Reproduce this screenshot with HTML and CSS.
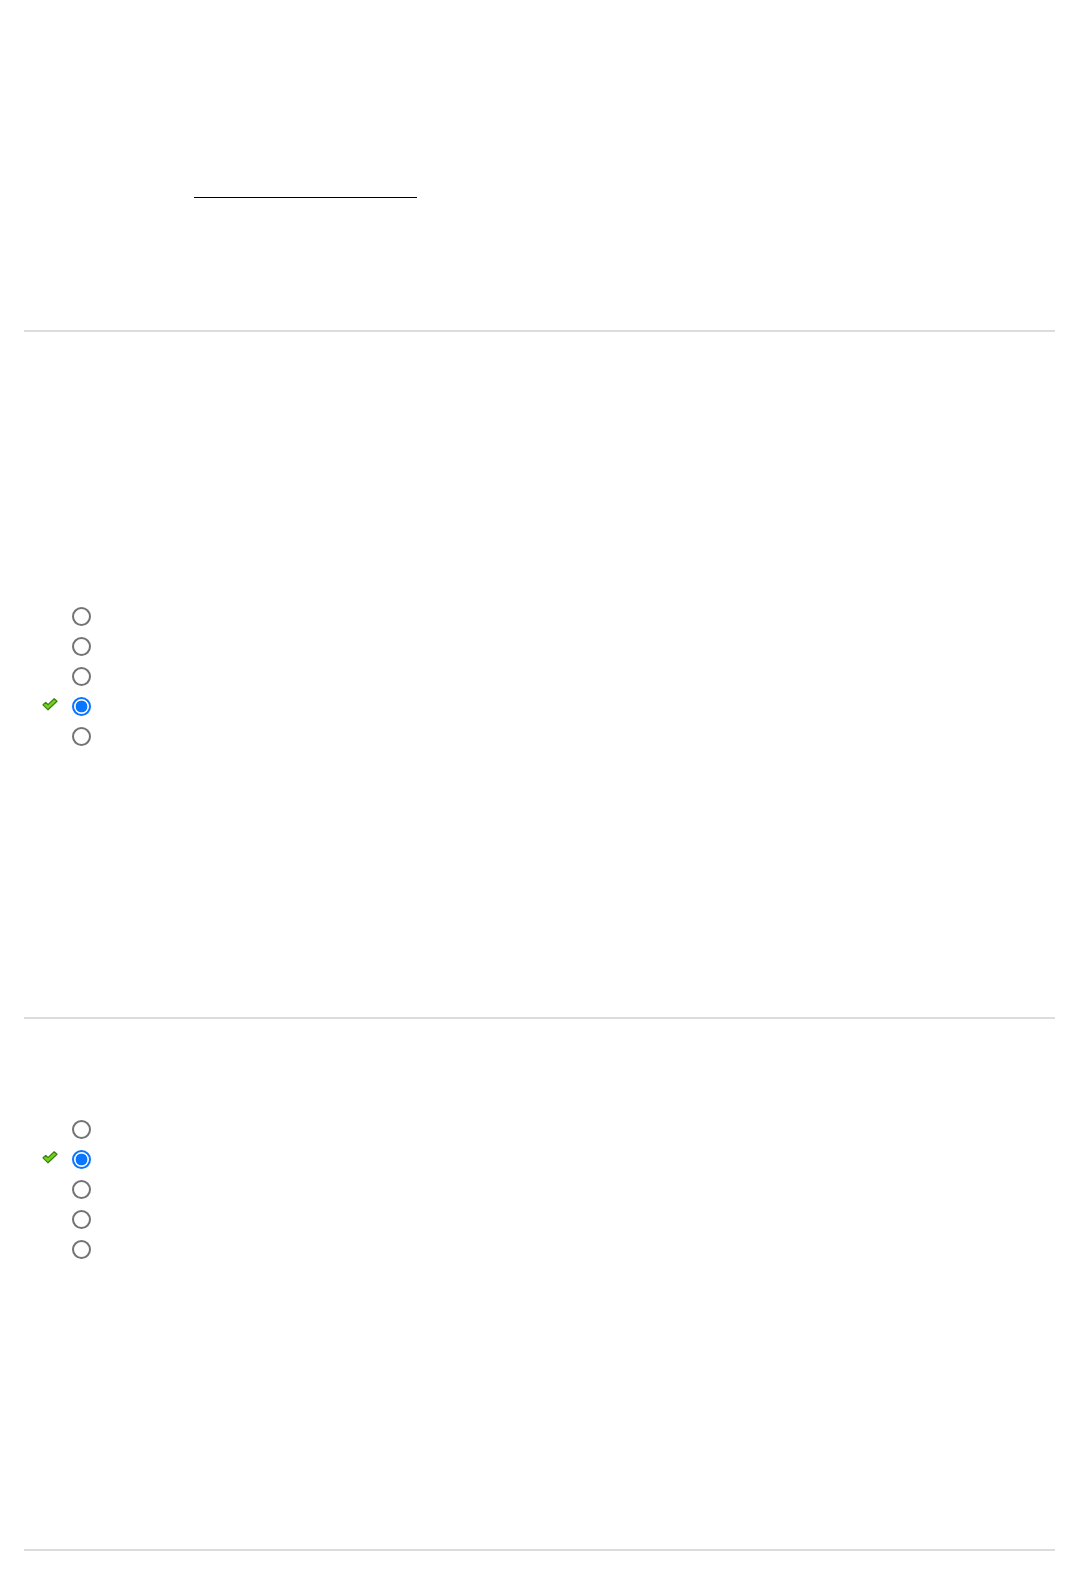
FILE: index.html
```html
<!DOCTYPE html>
<html lang="en">
<head>
  <meta charset="UTF-8">
  <title>Quiz</title>
  <link rel="stylesheet" href="styles.css">
</head>
<body>
  <div class="quiz">

    <div class="question q-blank">
      <span class="blank"></span>
    </div>
    <div class="divider"></div>

    <div class="question q-one">
      <div class="options">
        <label class="option"><span class="mark"></span><input type="radio" name="q2" disabled></label>
        <label class="option"><span class="mark"></span><input type="radio" name="q2" disabled></label>
        <label class="option"><span class="mark"></span><input type="radio" name="q2" disabled></label>
        <label class="option">
          <span class="mark">
            <svg width="16" height="13" viewBox="0 0 16 13"><polygon points="1,6.8 3.8,4.4 6,6.6 12.2,0.8 15,3.2 6,11.8" fill="#6fd41c" stroke="#3e7d10" stroke-width="1.2" stroke-linejoin="round"/></svg>
          </span>
          <input type="radio" name="q2" checked disabled>
        </label>
        <label class="option"><span class="mark"></span><input type="radio" name="q2" disabled></label>
      </div>
    </div>
    <div class="divider"></div>

    <div class="question q-two">
      <div class="options">
        <label class="option"><span class="mark"></span><input type="radio" name="q3" disabled></label>
        <label class="option">
          <span class="mark">
            <svg width="16" height="13" viewBox="0 0 16 13"><polygon points="1,6.8 3.8,4.4 6,6.6 12.2,0.8 15,3.2 6,11.8" fill="#6fd41c" stroke="#3e7d10" stroke-width="1.2" stroke-linejoin="round"/></svg>
          </span>
          <input type="radio" name="q3" checked disabled>
        </label>
        <label class="option"><span class="mark"></span><input type="radio" name="q3" disabled></label>
        <label class="option"><span class="mark"></span><input type="radio" name="q3" disabled></label>
        <label class="option"><span class="mark"></span><input type="radio" name="q3" disabled></label>
      </div>
    </div>
    <div class="divider"></div>

  </div>
</body>
</html>
```

FILE: styles.css
```css
body {
  margin: 0;
  background: #fff;
  color: #222;
  font-family: "Liberation Sans", Arial, sans-serif;
  font-size: 14px;
}
.quiz {
  padding: 0 21px 0 24px;
}
.divider {
  height: 2px;
  background: #dcdcdc;
}
.q-blank {
  padding: 170px 0 132px;
}
.blank {
  display: block;
  margin-left: 170px;
  width: 223px;
  height: 27px;
  border-bottom: 1px solid #000;
}
.q-one {
  padding: 269px 0 266px;
}
.q-two {
  padding: 95px 0 285px;
}
.options {
  display: flex;
  flex-direction: column;
}
.option {
  display: flex;
  align-items: center;
  height: 30px;
  padding-left: 18px;
}
.mark {
  width: 16px;
  height: 13px;
  display: flex;
  align-items: center;
  margin-top: -4px;
}
.option input {
  appearance: none;
  -webkit-appearance: none;
  margin: 0 0 0 14px;
  width: 19px;
  height: 19px;
  border: 2px solid #737373;
  border-radius: 50%;
  background: #fff;
  box-sizing: border-box;
}
.option input:checked {
  border: 2px solid #0a75ff;
  background: radial-gradient(circle, #0a75ff 0 5.6px, #fff 6.2px);
}
```
